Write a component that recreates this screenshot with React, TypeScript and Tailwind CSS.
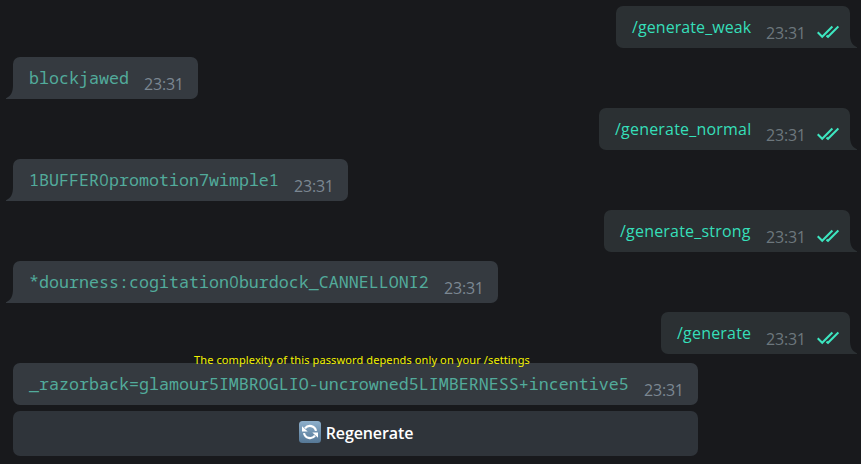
import { Fragment } from "react";

type BubbleProps = { text: string; outgoing?: boolean; width: string; tail?: boolean; tracking?: string };

function Checks() {
  return (
    <svg className="mt-[19px] ml-3 h-3.5 w-[22px] shrink-0" viewBox="0 0 22 14" fill="none" stroke="#3de6c0" strokeWidth="2.1">
      <path d="M0.7 7.2 L5.2 11.8 L15.4 1.4 M9.5 10.6 L11 11.8 L21.4 1.4" />
    </svg>
  );
}

// Monospaced text whose zeros are plain ovals, each in a cell of one character's width.
function Code({ text }: { text: string }) {
  return (
    <>
      {text.split("0").map((part, i) => (
        <Fragment key={i}>
          {i > 0 && <span className="inline-block w-[10px] text-center font-['Open_Sans',sans-serif] text-[16.5px]">0</span>}
          {part}
        </Fragment>
      ))}
    </>
  );
}

function Bubble({ text, outgoing = false, width, tail = true, tracking = "tracking-[0.2px]" }: BubbleProps) {
  if (outgoing) {
    return (
      <div className={`relative mr-[11px] flex h-[42px] self-end rounded-[7px] rounded-br-none bg-[#2b3033] pl-4 whitespace-nowrap ${width}`}>
        <span className={`mt-[10px] grow text-[16px] leading-[22px] text-[#36dfb9] ${tracking}`}>{text}</span>
        <span className="mt-4 w-[39px] shrink-0 text-[16px] leading-[22px] tracking-[-0.2px] text-[#6d777d]">23:31</span>
        <div className="mr-[11px] flex">
          <Checks />
        </div>
        <svg className="absolute bottom-0 left-full" width="7" height="14" viewBox="0 0 7 14">
          <path d="M0 0 C0 7 2 11 7 13.2 V14 H0Z" fill="#2b3033" />
        </svg>
      </div>
    );
  }
  return (
    <div className={`relative ml-[13px] flex h-[42px] rounded-[7px] bg-[#353a40] pl-4 whitespace-nowrap ${tail ? "rounded-bl-none" : ""} ${width}`}>
      <span className="mt-[10px] grow font-['Noto_Sans_Mono','Droid_Sans_Mono','DejaVu_Sans_Mono',monospace] text-[16.667px] leading-[22px] text-[#52ab9b]">
        <Code text={text} />
      </span>
      <span className="mt-4 mr-[14px] w-[40px] shrink-0 text-[16px] leading-[22px] tracking-[-0.2px] text-[#7c8792]">23:31</span>
      {tail && (
        <svg className="absolute right-full bottom-0" width="7" height="14" viewBox="0 0 7 14">
          <path d="M7 0 C7 7 5 11 0 13.2 V14 H7Z" fill="#353a40" />
        </svg>
      )}
    </div>
  );
}

function RefreshIcon() {
  return (
    <svg width="22" height="22" viewBox="0 0 22 22">
      <defs>
        <linearGradient id="tile" x1="0" y1="0" x2="0" y2="1">
          <stop offset="0" stopColor="#8eb0cc" />
          <stop offset="1" stopColor="#557795" />
        </linearGradient>
      </defs>
      <rect width="22" height="22" rx="3.5" fill="url(#tile)" />
      <g fill="none" stroke="#fff" strokeWidth="2.2">
        <path d="M6 7.4 A6.2 6.2 0 0 1 17 9.9" />
        <path d="M16 14.6 A6.2 6.2 0 0 1 5 12.1" />
      </g>
      <path d="M3 5.3 V10.6 H8.7Z M19 16.7 V11.4 H13.3Z" fill="#fff" />
    </svg>
  );
}

export default function App() {
  return (
    <main className="flex h-[464px] w-[861px] flex-col gap-[9px] overflow-hidden bg-[#18191c] pt-1.5 font-['Open_Sans',sans-serif]">
      <Bubble outgoing text="/generate_weak" width="w-[234px]" tracking="tracking-[0.08px]" />
      <Bubble text="blockjawed" width="w-[185px]" />
      <Bubble outgoing text="/generate_normal" width="w-[251px]" />
      <Bubble text="1BUFFER0promotion7wimple1" width="w-[335px]" />
      <Bubble outgoing text="/generate_strong" width="w-[246px]" />
      <Bubble text="*dourness:cogitation0burdock_CANNELLONI2" width="w-[485px]" />
      <Bubble outgoing text="/generate" width="w-[189px]" />
      <div className="relative flex flex-col gap-1.5">
        <Bubble text="_razorback=glamour5IMBROGLIO-uncrowned5LIMBERNESS+incentive5" width="w-[685px]" tail={false} />
        <p className="absolute -top-[11px] left-[194px] font-['Noto_Sans',sans-serif] text-[11px] leading-4 tracking-[0.113px] whitespace-nowrap text-[#f2f200]">
          The complexity of this password depends only on your /settings
        </p>
        <button className="ml-[13px] flex h-[45px] w-[685px] items-center justify-center gap-[5px] rounded-[7px] bg-[#2f343a] pb-0.5 pl-px text-[16px] font-semibold tracking-[-0.1px] text-white">
          <span className="-mt-px">
            <RefreshIcon />
          </span>
          <span>Regenerate</span>
        </button>
      </div>
    </main>
  );
}
